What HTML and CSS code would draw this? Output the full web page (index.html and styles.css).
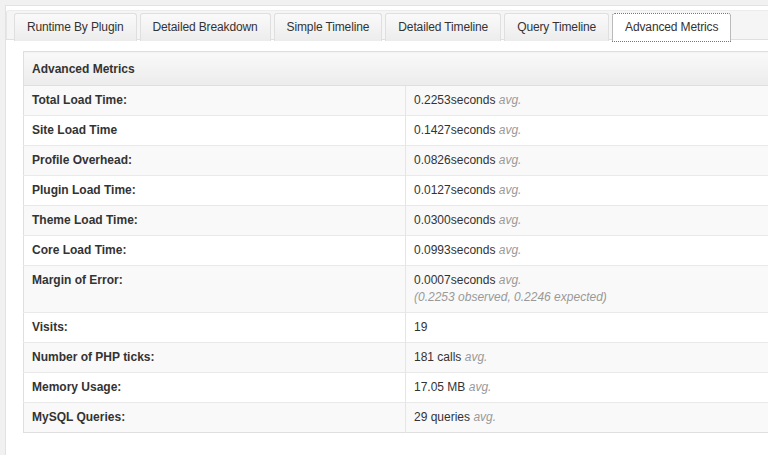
FILE: index.html
```html
<!DOCTYPE html>
<html lang="en">
<head>
    <meta charset="UTF-8">
    <title>Advanced Metrics</title>
    <link rel="stylesheet" href="styles.css">
</head>
<body>
    <div class="wrap">
        <div class="tabs">
            <a class="tab" href="#">Runtime By Plugin</a>
            <a class="tab" href="#">Detailed Breakdown</a>
            <a class="tab" href="#">Simple Timeline</a>
            <a class="tab" href="#">Detailed Timeline</a>
            <a class="tab" href="#">Query Timeline</a>
            <a class="tab active" href="#">Advanced Metrics</a>
        </div>

        <div class="content">
            <table class="metrics">
                <thead>
                    <tr><th colspan="2">Advanced Metrics</th></tr>
                </thead>
                <tbody>
                    <tr><td class="label">Total Load Time:</td><td>0.2253seconds <em>avg.</em></td></tr>
                    <tr><td class="label">Site Load Time</td><td>0.1427seconds <em>avg.</em></td></tr>
                    <tr><td class="label">Profile Overhead:</td><td>0.0826seconds <em>avg.</em></td></tr>
                    <tr><td class="label">Plugin Load Time:</td><td>0.0127seconds <em>avg.</em></td></tr>
                    <tr><td class="label">Theme Load Time:</td><td>0.0300seconds <em>avg.</em></td></tr>
                    <tr><td class="label">Core Load Time:</td><td>0.0993seconds <em>avg.</em></td></tr>
                    <tr><td class="label">Margin of Error:</td><td>0.0007seconds <em>avg.</em><br><em>(0.2253 observed, 0.2246 expected)</em></td></tr>
                    <tr><td class="label">Visits:</td><td>19</td></tr>
                    <tr><td class="label">Number of PHP ticks:</td><td>181 calls <em>avg.</em></td></tr>
                    <tr><td class="label">Memory Usage:</td><td>17.05 MB <em>avg.</em></td></tr>
                    <tr><td class="label">MySQL Queries:</td><td>29 queries <em>avg.</em></td></tr>
                </tbody>
            </table>
        </div>
    </div>
</body>
</html>
```

FILE: styles.css
```css
html, body {
    height: 100%;
}

body {
    margin: 0;
    background-color: #f1f1f1;
    font-family: 'Liberation Sans', Arial, sans-serif;
    font-size: 12px;
    color: #333;
    overflow: hidden;
}

.wrap {
    margin: 5px 0 0 5px;
    width: 820px;
    height: 100%;
    background-color: #fff;
    border: 1px solid #e2e2e2;
    box-sizing: border-box;
}

.tabs {
    display: flex;
    gap: 3px;
    margin-top: 4px;
    height: 30px;
    padding: 2px 0 0 7px;
    box-sizing: border-box;
    background-color: #f5f5f5;
    border-top: 1px solid #ececec;
    border-left: 1px solid #e6e6e6;
    border-bottom: 1px solid #dfdfdf;
    border-radius: 3px 0 0 0;
}

.tab {
    display: block;
    height: 28px;
    line-height: 27px;
    padding: 0 12px;
    box-sizing: border-box;
    border: 1px solid #dfdfdf;
    border-bottom: none;
    border-radius: 3px 3px 0 0;
    background: linear-gradient(to bottom, #fafafa, #ececec);
    color: #333;
    letter-spacing: -0.13px;
    text-decoration: none;
    white-space: nowrap;
}

.tab.active {
    background: #fff;
    height: 29px;
    margin-bottom: -1px;
    border: 1px dotted #777;
}

.content {
    padding: 11px 0 0 17px;
}

.metrics {
    width: 790px;
    border-collapse: collapse;
    border: 1px solid #dfdfdf;
}

.metrics th {
    height: 33px;
    padding: 0 8px;
    text-align: left;
    font-weight: bold;
    background: linear-gradient(to bottom, #f9f9f9, #ececec);
    border-bottom: 1px solid #dfdfdf;
}

.metrics td {
    padding: 6px 7px 6px 8px;
    line-height: 17px;
    vertical-align: top;
    border-top: 1px solid #e9e9e9;
}

.metrics td.label {
    width: 366px;
    font-weight: bold;
    border-right: 1px solid #e5e5e5;
}

.metrics tbody tr:nth-child(odd) {
    background-color: #f9f9f9;
}

.metrics em {
    color: #999;
}
```
